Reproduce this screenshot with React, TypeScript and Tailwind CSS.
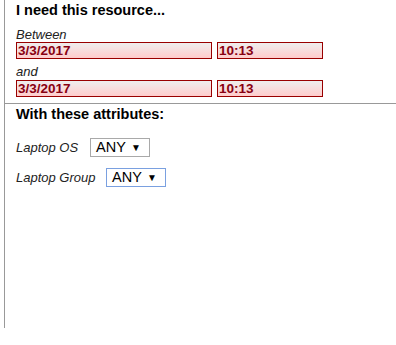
import React from "react";

function RedBox({ w, text }: { w: string; text: string }) {
  return (
    <div
      className={`${w} h-[17px] border border-[#990000] bg-linear-to-b from-[#eeeeee] to-[#ffcccc] pl-[1px] text-[13.5px] font-bold leading-[15px] text-[#880011]`}
    >
      {text}
    </div>
  );
}

function FakeSelect({ focused }: { focused?: boolean }) {
  return (
    <div
      className={`flex h-[19px] w-[60px] items-center justify-between border bg-white pl-[5px] pr-[8px] text-[14.5px] leading-[17px] text-black ${
        focused ? "border-[#7aa0e0]" : "border-[#a9a9a9]"
      }`}
    >
      <span>ANY</span>
      <span className="text-[10px] leading-[10px]">▼</span>
    </div>
  );
}

export default function App() {
  return (
    <div className="h-[345px] w-[396px] overflow-hidden bg-white font-['Liberation_Sans',Arial,sans-serif] text-black">
      <div className="ml-[4px] h-[328px] border-l border-[#999999] pl-[11px]">
        <div className="pt-[2px] text-[14.5px] font-bold leading-[17px]">I need this resource...</div>
        <div className="mt-[9px] text-[13px] italic leading-[14px] text-[#222]">Between</div>
        <div className="flex gap-[5px]">
          <RedBox w="w-[196px]" text="3/3/2017" />
          <RedBox w="w-[106px]" text="10:13" />
        </div>
        <div className="mt-[6px] text-[13px] italic leading-[14px] text-[#222]">and</div>
        <div className="mt-[1px] flex gap-[5px]">
          <RedBox w="w-[196px]" text="3/3/2017" />
          <RedBox w="w-[106px]" text="10:13" />
        </div>
        <div className="-ml-[11px] mt-[6px] border-t border-[#999999]" />
        <div className="mt-[2px] text-[14.5px] font-bold leading-[17px]">With these attributes:</div>
        <div className="mt-[15px] flex items-center">
          <span className="w-[74px] text-[13px] italic leading-[15px] text-[#222]">Laptop OS</span>
          <FakeSelect />
        </div>
        <div className="mt-[11px] flex items-center">
          <span className="w-[90px] text-[13px] italic leading-[15px] text-[#222]">Laptop Group</span>
          <FakeSelect focused />
        </div>
      </div>
    </div>
  );
}
